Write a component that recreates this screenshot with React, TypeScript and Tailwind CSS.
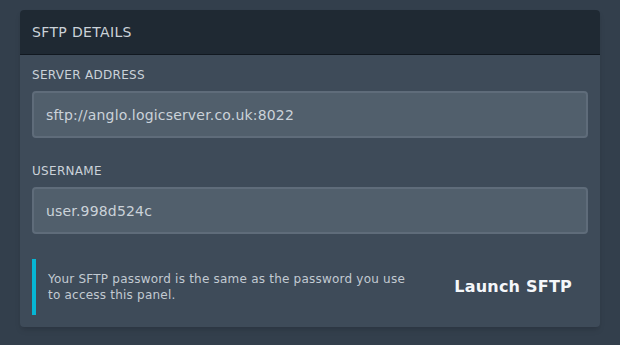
import React from 'react';

const Field: React.FC<{ label: string; value: string; className?: string }> = ({ label, value, className }) => (
  <div className={className}>
    <label className="block text-xs leading-4 uppercase tracking-wide text-[#cbd2d9] mb-2">{label}</label>
    <input
      readOnly
      value={value}
      className="block w-full h-[47px] px-3 rounded bg-[#515f6c] border-2 border-[#5f6c7a] text-sm tracking-[0.18px] text-[#cbd2d9] outline-none"
    />
  </div>
);

export default function App() {
  return (
    <div className="min-h-[345px] bg-[#333f4c] pt-[10px] px-5 font-['DejaVu_Sans',sans-serif]">
      <div className="rounded bg-[#3e4b59] shadow-md overflow-hidden">
        <div className="bg-[#1f2933] border-b border-[#111820] px-3 py-3">
          <h2 className="text-sm leading-5 tracking-wide text-[#cbd2d9]">SFTP DETAILS</h2>
        </div>
        <div className="p-3">
          <Field label="Server Address" value="sftp://anglo.logicserver.co.uk:8022" />
          <Field label="Username" value="user.998d524c" className="mt-[25px]" />
          <div className="mt-[25px] flex items-center">
            <div className="flex-1 border-l-4 border-[#06b6d4] h-14 flex items-center pl-3">
              <p className="w-[368px] text-xs leading-4 tracking-[0.22px] text-[#c2cad2]">
                Your SFTP password is the same as the password you use to access this panel.
              </p>
            </div>
            <button className="px-4 py-2 text-base font-bold tracking-[0.22px] text-[#f5f7fa]">Launch SFTP</button>
          </div>
        </div>
      </div>
    </div>
  );
}
